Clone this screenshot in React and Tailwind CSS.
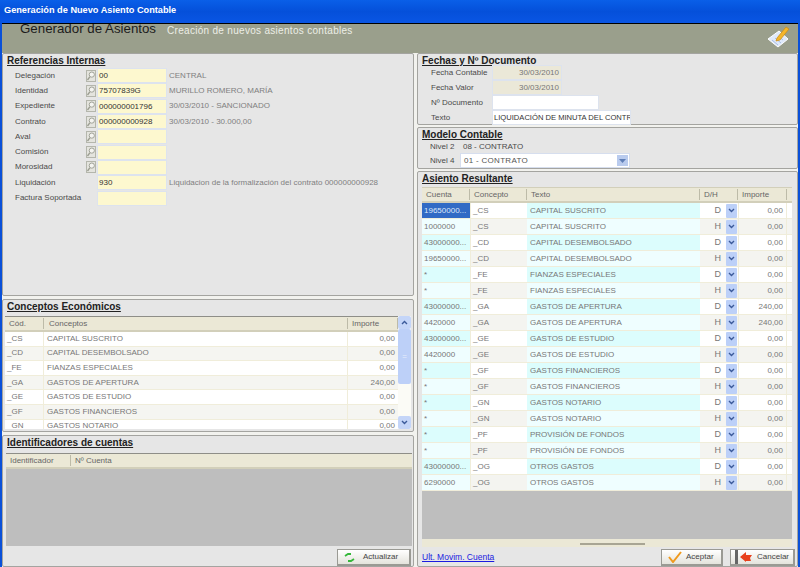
import React from 'react';

const conceptos = [
  ['_CS', 'CAPITAL SUSCRITO', '0,00'],
  ['_CD', 'CAPITAL DESEMBOLSADO', '0,00'],
  ['_FE', 'FIANZAS ESPECIALES', '0,00'],
  ['_GA', 'GASTOS DE APERTURA', '240,00'],
  ['_GE', 'GASTOS DE ESTUDIO', '0,00'],
  ['_GF', 'GASTOS FINANCIEROS', '0,00'],
  ['_GN', 'GASTOS NOTARIO', '0,00'],
];

const asiento = [
  ['19650000...', '_CS', 'CAPITAL SUSCRITO', 'D', '0,00'],
  ['1000000', '_CS', 'CAPITAL SUSCRITO', 'H', '0,00'],
  ['43000000...', '_CD', 'CAPITAL DESEMBOLSADO', 'D', '0,00'],
  ['19650000...', '_CD', 'CAPITAL DESEMBOLSADO', 'H', '0,00'],
  ['*', '_FE', 'FIANZAS ESPECIALES', 'D', '0,00'],
  ['*', '_FE', 'FIANZAS ESPECIALES', 'H', '0,00'],
  ['43000000...', '_GA', 'GASTOS DE APERTURA', 'D', '240,00'],
  ['4420000', '_GA', 'GASTOS DE APERTURA', 'H', '240,00'],
  ['43000000...', '_GE', 'GASTOS DE ESTUDIO', 'D', '0,00'],
  ['4420000', '_GE', 'GASTOS DE ESTUDIO', 'H', '0,00'],
  ['*', '_GF', 'GASTOS FINANCIEROS', 'D', '0,00'],
  ['*', '_GF', 'GASTOS FINANCIEROS', 'H', '0,00'],
  ['*', '_GN', 'GASTOS NOTARIO', 'D', '0,00'],
  ['*', '_GN', 'GASTOS NOTARIO', 'H', '0,00'],
  ['*', '_PF', 'PROVISIÓN DE FONDOS', 'D', '0,00'],
  ['*', '_PF', 'PROVISIÓN DE FONDOS', 'H', '0,00'],
  ['43000000...', '_OG', 'OTROS GASTOS', 'D', '0,00'],
  ['6290000', '_OG', 'OTROS GASTOS', 'H', '0,00'],
];

const referencias = [
  ['Delegación', true, '00', 'CENTRAL'],
  ['Identidad', true, '75707839G', 'MURILLO ROMERO, MARÍA'],
  ['Expediente', true, '000000001796', '30/03/2010 - SANCIONADO'],
  ['Contrato', true, '000000000928', '30/03/2010 - 30.000,00'],
  ['Aval', true, '', ''],
  ['Comisión', true, '', ''],
  ['Morosidad', true, '', ''],
  ['Liquidación', false, '930', 'Liquidacion de la formalización del contrato 000000000928'],
  ['Factura Soportada', false, '', ''],
];

const SearchIcon = () => (
  <svg width="10" height="12" viewBox="0 0 10 12" fill="none">
    <rect x="0.5" y="0.5" width="9" height="11" fill="#e4e4de" stroke="#b4b6ac" />
    <circle cx="5.8" cy="4.6" r="2.6" fill="#f4f4f0" stroke="#a0a298" />
    <path d="M3.8 6.8 1.5 10" stroke="#9a9c90" strokeWidth="1.3" />
  </svg>
);

const ChevronDown = () => (
  <svg width="7" height="5" viewBox="0 0 7 5" fill="none">
    <path d="M1 1l2.5 2.5L6 1" stroke="#3b5a9a" strokeWidth="1.4" />
  </svg>
);

const SectionTitle = ({ className = '', children }) => (
  <h2 className={`text-[10px] leading-[13px] font-bold text-[#222] underline ${className}`}>{children}</h2>
);

const Panel = ({ className, children }) => (
  <section className={`bg-[#e6e6e6] border border-[#a4a4a0] rounded-[2px] ${className}`}>{children}</section>
);

const HeaderCell = ({ className, children }) => (
  <div className={`h-[11px] flex items-center pl-[4px] border-r border-r-[#bdbba8] truncate ${className}`}>{children}</div>
);

const GridHeader = ({ children }) => (
  <div className="h-[15px] shrink-0 flex items-center bg-[#ebe8d6] border-b-2 border-b-[#d2cfba] text-[#666]">{children}</div>
);

const btn = 'h-[17px] flex items-center bg-gradient-to-b from-white to-[#e4e3dc] border border-[#9a9a94] border-r-2 border-b-2 text-[#444] text-[8px]';

export default function App() {
  return (
    <div className="w-[800px] h-[567px] flex flex-col overflow-hidden bg-[#0a50d8] text-[8px] text-[#777] font-['Liberation_Sans',sans-serif]">
      <div className="h-[23px] shrink-0 flex items-center pl-[4px] pb-[2px] text-[9.2px] font-bold text-white bg-gradient-to-b from-[#0a5fe8] via-[#0550da] to-[#0a56e4]">
        Generación de Nuevo Asiento Contable
      </div>

      <div className="flex-1 min-h-0 flex flex-col mx-[2px] bg-[#f2f2ee] border-t border-t-black">
        <header className="h-[29px] shrink-0 flex bg-[#9a9f8c] pl-[18px] pr-[8px]">
          <h1 className="text-[13.3px] leading-[11px] text-[#1c1c1c] mt-[-1px]">Generador de Asientos</h1>
          <p className="ml-[11px] text-[10px] leading-[11px] tracking-[0.3px] text-[#eceee6] mt-[1px] flex-1">
            Creación de nuevos asientos contables
          </p>
          <svg width="24" height="24" viewBox="0 0 24 24" className="mt-[1px]">
            <path d="M2 14 13 6l9 8-10 8z" fill="#dfe9fa" stroke="#fff" />
            <path d="M6 15l6 5M9 13l6 5M12 11l5 4" stroke="#a9bfe4" />
            <path d="M11 13 20 2l3 2-9 11-4 1z" fill="#f5b62a" stroke="#c98a12" strokeWidth="0.7" />
          </svg>
        </header>

        <div className="flex-1 min-h-0 flex gap-[3px]">
          {/* left column */}
          <div className="w-[412px] shrink-0 flex flex-col gap-[3px]">
            <Panel className="h-[243px] shrink-0 px-[4px]">
              <SectionTitle>Referencias Internas</SectionTitle>
              <div className="mt-[1px] ml-[8px] grid auto-rows-[15.3px]">
                {referencias.map(([label, hasIcon, value, desc]) => (
                  <div key={label} className="flex items-center">
                    <span className="w-[71px] shrink-0 text-[#4a4a4a] whitespace-nowrap">{label}</span>
                    <span className="w-[11px] h-[12px] shrink-0">{hasIcon && <SearchIcon />}</span>
                    <span className="w-[70px] h-[15px] shrink-0 bg-[#fdf8cf] border border-[#dde3ee] pl-[1px] leading-[13px] text-[#333]">
                      {value}
                    </span>
                    <span className="ml-[2px] whitespace-nowrap text-[#808080]">{desc}</span>
                  </div>
                ))}
              </div>
            </Panel>

            <Panel className="h-[133px] shrink-0 pl-[2px] pr-[2px] overflow-hidden">
              <SectionTitle className="ml-[2px]">Conceptos Económicos</SectionTitle>
              <div className="mt-[3px] flex">
                <div className="flex-1 min-w-0 border-t border-t-[#8e8e88] h-[113px] overflow-hidden">
                  <GridHeader>
                    <HeaderCell className="w-[39px]">Cód.</HeaderCell>
                    <HeaderCell className="w-[304px] pl-[5px]">Conceptos</HeaderCell>
                    <HeaderCell className="flex-1">Importe</HeaderCell>
                  </GridHeader>
                  {conceptos.map(([cod, name, importe], i) => (
                    <div key={cod} className={`h-[14.6px] flex items-center border-b border-b-[#f0edda] ${i % 2 ? 'bg-[#f5f5f1]' : 'bg-white'}`}>
                      <div className="w-[39px] pl-[2px] h-full flex items-center border-r border-r-[#f0edda]">{cod}</div>
                      <div className="w-[304px] pl-[3px] h-full flex items-center border-r border-r-[#f0edda]">{name}</div>
                      <div className="flex-1 pr-[3px] text-right">{importe}</div>
                    </div>
                  ))}
                </div>
                <div className="w-[13px] h-[113px] shrink-0 flex flex-col bg-[#fbfbf6]">
                  <div className="h-[13px] flex items-center justify-center bg-[#c4d5f8] rotate-180 rounded-[2px]"><ChevronDown /></div>
                  <div className="h-[55px] bg-[#bdd0f8] flex items-center justify-center text-[#e8eefb] rounded-[2px]">=</div>
                  <div className="flex-1" />
                  <div className="h-[13px] flex items-center justify-center bg-[#c4d5f8] rounded-[2px]"><ChevronDown /></div>
                </div>
              </div>
            </Panel>

            <Panel className="flex-1 min-h-0 pl-[3px] pr-[1px] flex flex-col">
              <SectionTitle className="ml-[1px]">Identificadores de cuentas</SectionTitle>
              <div className="mt-[4px] h-[93px] flex flex-col border-t border-t-[#8e8e88]">
                <GridHeader>
                  <HeaderCell className="w-[65px]">Identificador</HeaderCell>
                  <div className="pl-[4px]">Nº Cuenta</div>
                </GridHeader>
                <div className="flex-1 bg-[#bebebe]" />
              </div>
              <div className="flex justify-end mt-[3px] pr-[1px]">
                <button className={`${btn} w-[74px] pl-[6px] gap-[8px]`}>
                  <svg width="11" height="9" viewBox="0 0 11 9" fill="none">
                    <path d="M1 3 4 1h3" stroke="#35b83a" strokeWidth="1.8" />
                    <path d="M10 6 7 8H4" stroke="#35b83a" strokeWidth="1.8" />
                  </svg>
                  Actualizar
                </button>
              </div>
            </Panel>
          </div>

          {/* right column */}
          <div className="flex-1 min-w-0 flex flex-col gap-[2px]">
            <Panel className="h-[72px] shrink-0 px-[4px]">
              <SectionTitle>Fechas y Nº Documento</SectionTitle>
              <div className="ml-[9px] mt-[-2px] flex flex-col">
                {[
                  ['Fecha Contable', '30/03/2010', 'w-[70px] bg-[#ebe8d8] text-right pr-[2px]'],
                  ['Fecha Valor', '30/03/2010', 'w-[70px] bg-[#ebe8d8] text-right pr-[2px]'],
                  ['Nº Documento', '', 'w-[107px] bg-white'],
                  ['Texto', 'LIQUIDACIÓN DE MINUTA DEL CONTRATO', 'w-[139px] bg-white text-[#333] text-[7.6px] pl-[1px]'],
                ].map(([label, value, cls]) => (
                  <div key={label} className="h-[15px] flex items-center">
                    <span className="w-[61px] shrink-0 text-[#4a4a4a] whitespace-nowrap">{label}</span>
                    <span className={`h-[15px] leading-[13px] border border-[#dde3ee] overflow-hidden whitespace-nowrap ${cls}`}>{value}</span>
                  </div>
                ))}
              </div>
            </Panel>

            <Panel className="h-[42px] shrink-0 px-[4px]">
              <SectionTitle>Modelo Contable</SectionTitle>
              <div className="ml-[8px] h-[12px] flex items-center text-[#4a4a4a]">
                <span className="w-[33px]">Nivel 2</span>
                <span>08 - CONTRATO</span>
              </div>
              <div className="ml-[8px] flex items-center text-[#4a4a4a]">
                <span className="w-[30px]">Nivel 4</span>
                <div className="w-[170px] h-[15px] flex items-center justify-between bg-white border border-[#d6deee] pl-[3px] pr-[1px] tracking-[0.3px] text-[#555]">
                  01 - CONTRATO
                  <span className="w-[11px] h-[11px] bg-[#b9cbee] flex items-center justify-center">
                    <svg width="7" height="4" viewBox="0 0 7 4"><path d="M0 0h7L3.5 4z" fill="#5f7fb8" /></svg>
                  </span>
                </div>
              </div>
            </Panel>

            <Panel className="flex-1 min-h-0 pl-[4px] pr-[2px] flex flex-col">
              <SectionTitle>Asiento Resultante</SectionTitle>
              <div className="mt-[2px] mr-[3px] h-[362px] flex flex-col border-t border-t-[#d2cfba] bg-[#bebebe]">
                <GridHeader>
                  <HeaderCell className="w-[48px]">Cuenta</HeaderCell>
                  <HeaderCell className="w-[57px]">Concepto</HeaderCell>
                  <HeaderCell className="w-[173px]">Texto</HeaderCell>
                  <HeaderCell className="w-[38px]">D/H</HeaderCell>
                  <HeaderCell className="w-[49px]">Importe</HeaderCell>
                </GridHeader>
                {asiento.map(([cuenta, concepto, texto, dh, importe], i) => {
                  const odd = i % 2 === 1;
                  return (
                    <div key={i} className={`h-[16px] shrink-0 flex items-center border-b border-b-[#f0edda] ${odd ? 'bg-[#f4f4f0]' : 'bg-white'}`}>
                      <div className={`w-[48px] h-full pl-[2px] flex items-center ${i === 0 ? 'bg-[#316ac5] text-[#dfe8f8]' : odd ? 'bg-[#effeff]' : 'bg-[#dcfdfd]'}`}>{cuenta}</div>
                      <div className="w-[57px] h-full pl-[2px] flex items-center border-l border-l-[#f0edda]">{concepto}</div>
                      <div className={`w-[173px] h-full pl-[3px] flex items-center ${odd ? 'bg-[#effeff]' : 'bg-[#dcfdfd]'}`}>{texto}</div>
                      <div className="w-[38px] h-full flex items-center justify-end gap-[5px] pr-[1px] text-[9px]">
                        {dh}
                        <span className="w-[11px] h-[14px] flex items-center justify-center bg-[#bcd0f8] rounded-[1px]"><ChevronDown /></span>
                      </div>
                      <div className="w-[49px] h-full pr-[3px] flex items-center justify-end border-x border-x-[#f0edda]">{importe}</div>
                    </div>
                  );
                })}
                <div className="flex-1" />
                <div className="h-[8px] shrink-0 flex items-start justify-center bg-[#ebe8d6] pt-[4px] pl-[10px]">
                  <div className="w-[65px] h-[2px] bg-[#a8a594]" />
                </div>
              </div>
              <div className="flex items-center justify-between mt-[2px]">
                <a className="text-[#1a1ae0] underline text-[8.5px]">Ult. Movim. Cuenta</a>
                <div className="flex gap-[7px]">
                  <button className={`${btn} w-[62px] pl-[6px] gap-[4px]`}>
                    <svg width="14" height="12" viewBox="0 0 14 12" fill="none"><path d="M1 6l4 5 8-10" stroke="#f09a1e" strokeWidth="2" /></svg>
                    Aceptar
                  </button>
                  <button className={`${btn} w-[65px] gap-[2px]`}>
                    <span className="w-[3px] h-full bg-[#666] ml-[4px]" />
                    <svg width="13" height="12" viewBox="0 0 13 12"><path d="M0 6l6-5v3h6l-2 3 1 3H6v1z" fill="#e8401c" /></svg>
                    <span className="ml-[2px]">Cancelar</span>
                  </button>
                </div>
              </div>
            </Panel>
          </div>
        </div>
      </div>
    </div>
  );
}
